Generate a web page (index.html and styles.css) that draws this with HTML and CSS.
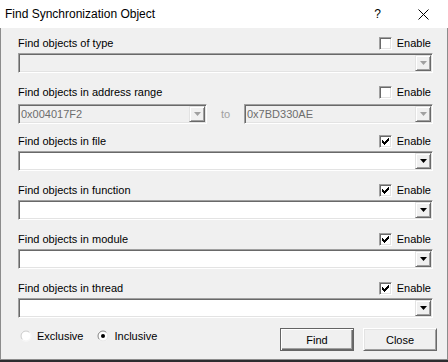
FILE: index.html
```html
<!DOCTYPE html>
<html lang="en">
<head>
  <meta charset="UTF-8">
  <title>Find Synchronization Object</title>
  <link rel="stylesheet" href="styles.css">
</head>
<body>
  <div class="window">
    <div class="titlebar">
      <span class="title">Find Synchronization Object</span>
      <span class="help">?</span>
      <svg class="close-x" width="11" height="11" viewBox="0 0 11 11"><path d="M0.5 0.5 L10.5 10.5 M10.5 0.5 L0.5 10.5" stroke="#000" stroke-width="1" fill="none"/></svg>
    </div>

    <div class="content">
      <div class="section">
        <div class="section-head">
          <span>Find objects of type</span>
          <span class="check"><span class="box"></span>Enable</span>
        </div>
        <div class="combo disabled">
          <span class="value"></span>
          <span class="drop"><svg width="7" height="4" viewBox="0 0 7 4"><polygon points="0,0 7,0 3.5,4"/></svg></span>
        </div>
      </div>

      <div class="section range">
        <div class="section-head">
          <span>Find objects in address range</span>
          <span class="check"><span class="box"></span>Enable</span>
        </div>
        <div class="range-row">
          <div class="combo disabled">
            <span class="value">0x004017F2</span>
            <span class="drop"><svg width="7" height="4" viewBox="0 0 7 4"><polygon points="0,0 7,0 3.5,4"/></svg></span>
          </div>
          <span class="to">to</span>
          <div class="combo disabled">
            <span class="value">0x7BD330AE</span>
            <span class="drop"><svg width="7" height="4" viewBox="0 0 7 4"><polygon points="0,0 7,0 3.5,4"/></svg></span>
          </div>
        </div>
      </div>

      <div class="section">
        <div class="section-head">
          <span>Find objects in file</span>
          <span class="check"><span class="box checked"><svg width="7" height="7" viewBox="0 0 7 7"><path d="M6 0h1v1h-1z M5 1h2v1h-2z M0 2h1v1h-1z M4 2h3v1h-3z M0 3h2v1h-2z M3 3h3v1h-3z M0 4h5v1h-5z M1 5h3v1h-3z M2 6h1v1h-1z"/></svg></span>Enable</span>
        </div>
        <div class="combo">
          <span class="value"></span>
          <span class="drop"><svg width="7" height="4" viewBox="0 0 7 4"><polygon points="0,0 7,0 3.5,4"/></svg></span>
        </div>
      </div>

      <div class="section">
        <div class="section-head">
          <span>Find objects in function</span>
          <span class="check"><span class="box checked"><svg width="7" height="7" viewBox="0 0 7 7"><path d="M6 0h1v1h-1z M5 1h2v1h-2z M0 2h1v1h-1z M4 2h3v1h-3z M0 3h2v1h-2z M3 3h3v1h-3z M0 4h5v1h-5z M1 5h3v1h-3z M2 6h1v1h-1z"/></svg></span>Enable</span>
        </div>
        <div class="combo">
          <span class="value"></span>
          <span class="drop"><svg width="7" height="4" viewBox="0 0 7 4"><polygon points="0,0 7,0 3.5,4"/></svg></span>
        </div>
      </div>

      <div class="section">
        <div class="section-head">
          <span>Find objects in module</span>
          <span class="check"><span class="box checked"><svg width="7" height="7" viewBox="0 0 7 7"><path d="M6 0h1v1h-1z M5 1h2v1h-2z M0 2h1v1h-1z M4 2h3v1h-3z M0 3h2v1h-2z M3 3h3v1h-3z M0 4h5v1h-5z M1 5h3v1h-3z M2 6h1v1h-1z"/></svg></span>Enable</span>
        </div>
        <div class="combo">
          <span class="value"></span>
          <span class="drop"><svg width="7" height="4" viewBox="0 0 7 4"><polygon points="0,0 7,0 3.5,4"/></svg></span>
        </div>
      </div>

      <div class="section">
        <div class="section-head">
          <span>Find objects in thread</span>
          <span class="check"><span class="box checked"><svg width="7" height="7" viewBox="0 0 7 7"><path d="M6 0h1v1h-1z M5 1h2v1h-2z M0 2h1v1h-1z M4 2h3v1h-3z M0 3h2v1h-2z M3 3h3v1h-3z M0 4h5v1h-5z M1 5h3v1h-3z M2 6h1v1h-1z"/></svg></span>Enable</span>
        </div>
        <div class="combo">
          <span class="value"></span>
          <span class="drop"><svg width="7" height="4" viewBox="0 0 7 4"><polygon points="0,0 7,0 3.5,4"/></svg></span>
        </div>
      </div>

      <div class="footer">
        <div class="radios">
          <span class="radio">
            <svg width="12" height="12" viewBox="0 0 12 12"><circle cx="6" cy="6" r="5.5" fill="#fff"/><path d="M2.46 9.54 A5 5 0 0 1 9.54 2.46" stroke="#c8c8c8" fill="none"/><path d="M9.54 2.46 A5 5 0 0 1 2.46 9.54" stroke="#f4f4f4" fill="none"/></svg>
            Exclusive
          </span>
          <span class="radio">
            <svg width="12" height="12" viewBox="0 0 12 12"><circle cx="6" cy="6" r="5.5" fill="#fff"/><path d="M2.46 9.54 A5 5 0 0 1 9.54 2.46" stroke="#808080" fill="none"/><path d="M9.54 2.46 A5 5 0 0 1 2.46 9.54" stroke="#e3e3e3" fill="none"/><circle cx="6" cy="6" r="2" fill="#000"/></svg>
            Inclusive
          </span>
        </div>
        <div class="buttons">
          <button class="btn default">Find</button>
          <button class="btn">Close</button>
        </div>
      </div>
    </div>
  </div>
</body>
</html>
```

FILE: styles.css
```css
html {
  background-color: #2d2d30;
}

body {
  margin: 0;
  font-family: "Liberation Sans", Arial, sans-serif;
  font-size: 11px;
  color: #000000;
}

.window {
  width: 448px;
  height: 360px;
  display: flex;
  flex-direction: column;
  background-color: #f0f0f0;
}

/* title bar */
.titlebar {
  height: 28px;
  flex-shrink: 0;
  display: flex;
  align-items: center;
  padding-left: 5px;
  background-color: #ffffff;
  font-size: 12px;
}

.title {
  flex: 1;
}

.help {
  margin-right: 37px;
}

.close-x {
  margin-right: 19px;
}

/* dialog body */
.content {
  flex: 1;
  border: 1px solid #8c8c8c;
  border-top: none;
  padding: 8px 10px 0 17px;
}

.section {
  margin-right: 4px;
  margin-bottom: 12px;
}

.section-head {
  height: 14px;
  line-height: 14px;
  display: flex;
  justify-content: space-between;
  align-items: center;
}

.check {
  display: flex;
  align-items: center;
  gap: 5px;
  padding-right: 2px;
}

.box {
  width: 13px;
  height: 13px;
  box-sizing: border-box;
  background-color: #ffffff;
  border: 1px solid;
  border-color: #a0a0a0 #ffffff #ffffff #a0a0a0;
  box-shadow: inset 1px 1px #696969, inset -1px -1px #e3e3e3;
  display: flex;
  align-items: center;
  justify-content: center;
}

.box svg {
  display: block;
}

/* combo boxes */
.combo {
  height: 20px;
  margin-top: 3px;
  box-sizing: border-box;
  padding: 1px;
  display: flex;
  align-items: center;
  background-color: #ffffff;
  border: 1px solid;
  border-color: #a0a0a0 #ffffff #ffffff #a0a0a0;
  box-shadow: inset 1px 1px #696969, inset -1px -1px #e3e3e3;
}

.combo .value {
  flex: 1;
  padding-left: 1px;
  line-height: 16px;
}

.combo.disabled {
  background-color: #f0f0f0;
  color: #6d6d6d;
}

.drop {
  width: 16px;
  height: 16px;
  box-sizing: border-box;
  display: flex;
  align-items: center;
  justify-content: center;
  background-color: #f0f0f0;
  border: 1px solid;
  border-color: #e3e3e3 #696969 #696969 #e3e3e3;
  box-shadow: inset 1px 1px #ffffff, inset -1px -1px #a0a0a0;
}

.drop svg {
  display: block;
  fill: #000000;
}

.combo.disabled .drop svg {
  fill: #a0a0a0;
}

.range {
  margin-bottom: 10px;
}

.range-row {
  display: flex;
  align-items: center;
  justify-content: space-between;
  margin-top: 5px;
}

.range-row .combo {
  width: 189px;
  margin-top: 0;
}

.to {
  color: #a0a0a0;
}

/* radios and buttons */
.footer {
  display: flex;
  justify-content: space-between;
  align-items: flex-start;
  margin-top: -2px;
}

.radios {
  display: flex;
  gap: 14px;
  margin-top: 1px;
  padding-left: 2px;
}

.radio {
  display: flex;
  align-items: center;
  gap: 5px;
  height: 14px;
}

.radio svg {
  display: block;
}

.buttons {
  display: flex;
  gap: 9px;
}

.btn {
  width: 74px;
  height: 23px;
  padding: 0;
  font-family: "Liberation Sans", Arial, sans-serif;
  font-size: 11px;
  color: #000000;
  background-color: #f0f0f0;
  border: 1px solid;
  border-color: #ffffff #696969 #696969 #ffffff;
  box-shadow: inset 1px 1px #e3e3e3, inset -1px -1px #a0a0a0;
}

.btn.default {
  border-color: #646464;
  box-shadow: inset 1px 1px #ffffff, inset -1px -1px #696969, inset -2px -2px #a0a0a0;
}
```
